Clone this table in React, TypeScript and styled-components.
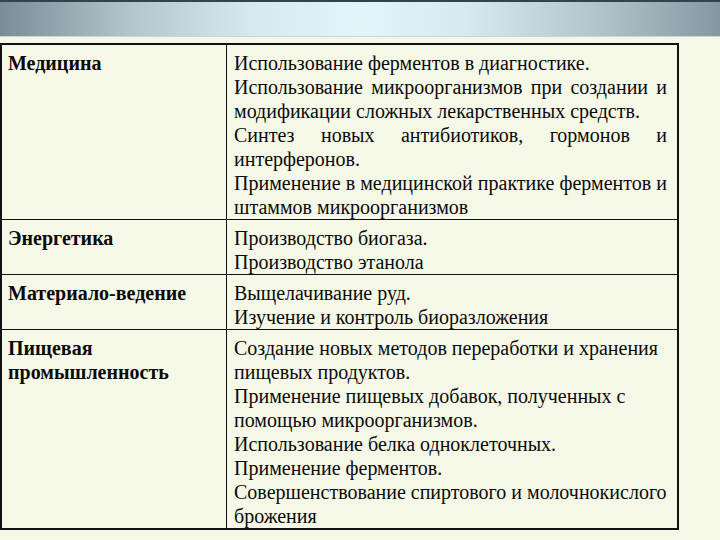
import styled, { createGlobalStyle } from "styled-components";

const Global = createGlobalStyle`
  html, body {
    margin: 0;
    padding: 0;
    background: #f6f8e7;
  }
`;

const Page = styled.div`
  width: 720px;
  height: 540px;
  overflow: hidden;
  background: #f6f8e7;
  font-family: "Liberation Serif", "Times New Roman", serif;
  color: #0a0a0a;
`;

const TopBar = styled.div`
  height: 34px;
  border-top: 2px solid #33434e;
  border-bottom: 1px solid #c8d4d6;
  background: linear-gradient(
    to right,
    #7c8c97 0%,
    #b3c4cc 18%,
    #d6e8f0 35%,
    #e3f4fb 50%,
    #d6e8f0 65%,
    #b0c1c9 84%,
    #8797a2 100%
  );
`;

const Table = styled.table`
  margin-top: 6px;
  width: 679px;
  border-collapse: collapse;
  border: 2px solid #111;
  font-family: "Liberation Serif", "Times New Roman", serif;
  font-size: 20px;
  line-height: 24px;
  color: #0a0a0a;
`;

const Row = styled.tr`
  border-bottom: 1.5px solid #111;
`;

const Label = styled.td`
  width: 212px;
  vertical-align: top;
  padding: 6px 6px 0 6px;
  font-weight: bold;
  border-right: 1.5px solid #111;
`;

const Body = styled.td`
  vertical-align: top;
  padding: 6px 10px 0 7px;
`;

const Line = styled.div<{ $justify?: boolean }>`
  text-align: ${(p) => (p.$justify ? "justify" : "left")};
  text-align-last: ${(p) => (p.$justify ? "justify" : "left")};
  white-space: ${(p) => (p.$justify ? "normal" : "nowrap")};
`;

type L = [string, boolean?];

const rows: { label: string[]; lines: L[] }[] = [
  {
    label: ["Медицина"],
    lines: [
      ["Использование ферментов в диагностике."],
      ["Использование микроорганизмов при создании и", true],
      ["модификации сложных лекарственных средств."],
      ["Синтез новых антибиотиков, гормонов и", true],
      ["интерферонов."],
      ["Применение в медицинской практике ферментов и", true],
      ["штаммов микроорганизмов"],
    ],
  },
  {
    label: ["Энергетика"],
    lines: [["Производство биогаза."], ["Производство этанола"]],
  },
  {
    label: ["Материало-ведение"],
    lines: [["Выщелачивание руд."], ["Изучение и контроль биоразложения"]],
  },
  {
    label: ["Пищевая", "промышленность"],
    lines: [
      ["Создание новых методов переработки и хранения"],
      ["пищевых продуктов."],
      ["Применение  пищевых добавок, полученных с"],
      ["помощью микроорганизмов."],
      ["Использование белка одноклеточных."],
      ["Применение ферментов."],
      ["Совершенствование спиртового и молочнокислого"],
      ["брожения"],
    ],
  },
];

export default function App() {
  return (
    <Page>
      <Global />
      <TopBar />
      <Table>
        <tbody>
          {rows.map((r) => (
            <Row key={r.label.join(" ")}>
              <Label>
                {r.label.map((t) => (
                  <div key={t}>{t}</div>
                ))}
              </Label>
              <Body>
                {r.lines.map(([t, j], i) => (
                  <Line key={i} $justify={j}>
                    {t}
                  </Line>
                ))}
              </Body>
            </Row>
          ))}
        </tbody>
      </Table>
    </Page>
  );
}
